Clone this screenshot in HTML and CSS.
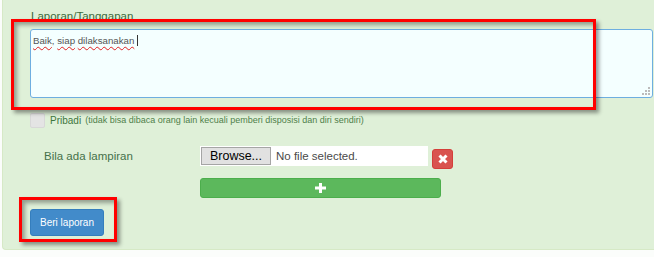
FILE: index.html
```html
<html>
<head>
<link rel="stylesheet" href="styles.css">
</head>

<body>
  <div class='panel'>
    <label class='field-label'>Laporan/Tanggapan</label>

    <div class='reply-box' role='textbox'>
      <span class='typo'>Baik</span>, <span class='typo'>siap</span> <span class='typo'>dilaksanakan</span><span class='caret'></span>
      <svg class='grip' width='10' height='8' viewBox='0 0 10 8'>
        <rect x='8' y='0' width='2' height='2'/>
        <rect x='5' y='3' width='2' height='2'/>
        <rect x='8' y='3' width='2' height='2'/>
        <rect x='2' y='6' width='2' height='2'/>
        <rect x='5' y='6' width='2' height='2'/>
        <rect x='8' y='6' width='2' height='2'/>
      </svg>
    </div>

    <div class='private-row'>
      <span class='check'></span>
      <span class='private-label'>Pribadi</span>
      <span class='private-note'>(tidak bisa dibaca orang lain kecuali pemberi disposisi dan diri sendiri)</span>
    </div>

    <div class='attach-row'>
      <span class='attach-label'>Bila ada lampiran</span>
      <div class='file-input'>
        <span class='browse'>Browse...</span>
        <span class='file-name'>No file selected.</span>
      </div>
      <button class='btn btn-danger btn-remove'>
        <svg width='10' height='10' viewBox='0 0 10 10'><path d='M1.5 1.5 L8.5 8.5 M8.5 1.5 L1.5 8.5' stroke='#fff' stroke-width='3'/></svg>
      </button>
    </div>

    <div class='add-row'>
      <button class='btn btn-success btn-add'>
        <svg width='11' height='10' viewBox='0 0 11 10'><path d='M4 0 H7 V3.5 H11 V6.5 H7 V10 H4 V6.5 H0 V3.5 H4 Z' fill='#fff'/></svg>
      </button>
    </div>

    <div class='submit-row'>
      <button class='btn btn-primary'>Beri laporan</button>
    </div>
  </div>

  <!-- annotation boxes drawn over the screenshot -->
  <div class='mark mark-reply'></div>
  <div class='mark mark-submit'></div>
</body>

</html>
```

FILE: styles.css
```css
body {
  margin: 0;
  background: #fbfdfb;
  font-family: "Liberation Sans", Arial, sans-serif;
  color: #3c763d;
}

.panel {
  margin-left: 2px;
  padding: 7px 1px 14px 27px;
  height: 250px;
  box-sizing: border-box;
  background: #dff0d8;
  border-left: 1px solid #d6e9c6;
  border-bottom: 1px solid #d6e9c6;
  border-bottom-left-radius: 4px;
}

.field-label {
  display: block;
  font-size: 11.5px;
  line-height: 19px;
  margin-bottom: 3px;
  margin-left: 1px;
  color: #3c6a3d;
}

.reply-box {
  position: relative;
  height: 69px;
  box-sizing: border-box;
  padding: 4px 2px;
  border: 1px solid #6eaee0;
  border-radius: 3px;
  background: #f4ffff;
  font-size: 9.7px;
  line-height: 13px;
  color: #555;
}

.typo {
  text-decoration: underline wavy #e02020;
  text-decoration-skip-ink: none;
  text-underline-offset: 2px;
}

.caret {
  display: inline-block;
  width: 0;
  height: 11px;
  margin-left: 3px;
  border-left: 1px solid #333;
  vertical-align: -2px;
}

.grip {
  position: absolute;
  right: 2px;
  bottom: 2px;
  fill: #bbb;
}

.private-row {
  display: flex;
  align-items: center;
  margin-top: 15px;
  height: 14px;
}

.check {
  width: 13px;
  height: 13px;
  border: 1px solid #d8d8d8;
  border-radius: 2px;
  background: #e4e4e4;
}

.private-label {
  font-size: 10px;
  margin-left: 5px;
}

.private-note {
  font-size: 9px;
  margin-left: 4px;
  color: #4f7f4a;
}

.attach-row {
  display: flex;
  align-items: center;
  margin-top: 19px;
  padding-left: 14px;
  height: 20px;
}

.attach-label {
  width: 156px;
  font-size: 11.5px;
  color: #46704a;
}

.file-input {
  display: flex;
  align-items: center;
  width: 228px;
  height: 20px;
  background: #fff;
}

.browse {
  height: 18px;
  width: 70px;
  margin-left: 1px;
  box-sizing: border-box;
  border: 1px solid #a5a5a5;
  background: #e1e1e1;
  color: #000;
  font-size: 12.5px;
  line-height: 16px;
  text-align: center;
}

.file-name {
  margin-left: 5px;
  font-size: 11.5px;
  color: #4a4a4a;
}

.btn {
  display: flex;
  align-items: center;
  justify-content: center;
  padding: 0;
  border: 1px solid;
  border-radius: 3px;
  font-family: inherit;
  color: #fff;
}

.btn-danger {
  background: #d9534f;
  border-color: #d43f3a;
}

.btn-remove {
  width: 21px;
  height: 20px;
  margin-left: 4px;
  margin-top: 5px;
}

.btn-success {
  background: #5cb85c;
  border-color: #4cae4c;
}

.add-row {
  margin-top: 12px;
  padding-left: 170px;
}

.btn-add {
  width: 241px;
  height: 20px;
}

.submit-row {
  margin-top: 11px;
}

.btn-primary {
  height: 27px;
  width: 74px;
  background: #428bca;
  border-color: #357ebd;
  font-size: 10px;
}

.mark {
  position: absolute;
  border: 3px solid #ff0000;
  box-shadow: 3px 3px 4px rgba(0,0,0,.4), inset 3px 3px 4px rgba(0,0,0,.35);
}

.mark-reply {
  left: 11px;
  top: 19px;
  width: 579px;
  height: 85px;
}

.mark-submit {
  left: 19px;
  top: 197px;
  width: 92px;
  height: 39px;
}
```
